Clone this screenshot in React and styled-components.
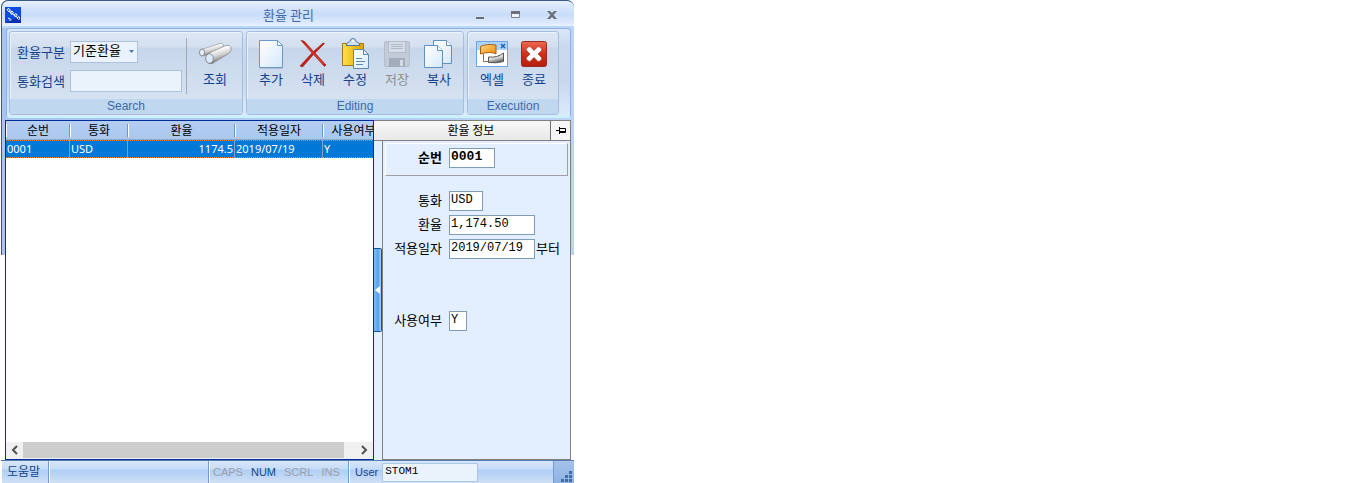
import React from "react";
import styled, { createGlobalStyle, css } from "styled-components";

const korean = '"Noto Sans CJK KR", sans-serif';
const sans = '"Liberation Sans", "Noto Sans CJK KR", sans-serif';
const mono = '"Liberation Mono", "Noto Sans CJK KR", monospace';
const navy = "#15428b";

const GlobalStyle = createGlobalStyle`
  *, *::before, *::after { box-sizing: border-box; }
  body { margin: 0; background: #fff; font: 13px/16px ${korean}; color: #000; }
  button, input, select { font: inherit; color: inherit; margin: 0; border-radius: 0; }
  svg { display: block; }
`;

const Window = styled.main`
  display: flex;
  flex-direction: column;
  width: 100%;
  max-width: 574px;
  min-height: 100vh;
  padding-left: 1px;
`;

const Frame = styled.div`
  flex: 1;
  display: flex;
  flex-direction: column;
  border-radius: 7px 7px 0 0;
  background:
    linear-gradient(#3b5a82, #3b5a82) 0 0 / 1px 255px no-repeat,
    linear-gradient(90deg, #a9c5ee, #bcd3f6) 0 0 / 100% 255px no-repeat;
`;

const TitleBar = styled.header`
  display: flex;
  align-items: center;
  height: 28px;
  padding: 0 10px 0 3px;
  border: 1px solid #3b5a82;
  border-width: 1px 0 0 1px;
  border-radius: 7px 7px 0 0;
  background: linear-gradient(#e6f0ff, #d3e3fb 30%, #c9dcf8 50%, #dce9fd 80%, #e8f2ff 92%, #9cc3f2 96%, #d8e8fd);
`;

const Title = styled.h1`
  flex: 1;
  margin: 0;
  padding-left: 88px;
  text-align: center;
  font: 13px/20px ${korean};
  color: #3e6aaa;
`;

const WindowButtons = styled.div`
  display: flex;
  gap: 12px;
`;

const WindowButton = styled.button`
  width: 24px;
  height: 20px;
  padding: 0;
  border: 0;
  background: none;
  display: grid;
  place-items: center;
`;

const Ribbon = styled.div`
  display: flex;
  gap: 3px;
  height: 90px;
  margin: 0 3px 2px 5px;
  padding: 2px 2px 1px;
  border: 1px solid #8db2e3;
  border-bottom: 2px solid #c9f2ff;
  border-radius: 4px;
  background: linear-gradient(#dbe7f8, #c9d9ee 20%, #c7d8ed 60%, #dcebfb);
`;

const Group = styled.section`
  display: flex;
  flex-direction: column;
  border: 1px solid #a5bedf;
  border-radius: 3px;
  box-shadow: inset 1px 1px 0 #eaf2fb;
  background: linear-gradient(#dde8f5, #d3dfef 18%, #c7d6ea 20%, #d8e5f3 100%);
`;

const GroupContent = styled.div`
  flex: 1;
  display: flex;
  padding: 4px 3px 0;
`;

const GroupCaption = styled.h2`
  margin: 0;
  height: 15px;
  background: #c0d7f0;
  color: #3e6aaa;
  text-align: center;
  font: 12px/15px ${sans};
`;

const SearchFields = styled.div`
  display: grid;
  grid-template-columns: 53px 112px;
  grid-auto-rows: 22px;
  row-gap: 7px;
  align-items: center;
  padding: 5px 4px 0;
  color: ${navy};
`;

const SelectWrap = styled.div`
  position: relative;
  width: 68px;
  height: 22px;
`;

const Select = styled.select`
  appearance: none;
  width: 100%;
  height: 100%;
  padding: 0 2px 4px;
  border: 1px solid #abc1de;
  background: #eaf2fb;
  color: #000;
`;

const SelectArrow = styled.svg`
  position: absolute;
  right: 4px;
  top: 9px;
  pointer-events: none;
`;

const SearchInput = styled.input`
  width: 100%;
  height: 22px;
  padding: 0 2px;
  border: 1px solid #abc1de;
  background: #eaf2fb;
`;

const Separator = styled.div`
  width: 1px;
  height: 56px;
  margin: 2px 4px 0 0;
  background: #a4a8b0;
`;

const ToolButton = styled.button`
  display: flex;
  flex-direction: column;
  align-items: center;
  width: ${(p) => (p.$wide ? "48px" : "42px")};
  height: 60px;
  padding: 1px 0 0;
  border: 0;
  background: none;
  color: ${navy};
  line-height: 16px;
  &:disabled { color: #8d8d8d; }
`;

const Body = styled.div`
  flex: 1;
  display: flex;
  margin: 0 3px 0 4px;
  min-height: 0;
`;

const GridPanel = styled.section`
  flex: 1 1 0;
  min-width: 0;
  display: flex;
  flex-direction: column;
  border: 1px solid #002d96;
  background: #fff;
`;

const GridScroll = styled.div`
  flex: 1;
  overflow: hidden;
`;

const Table = styled.table`
  width: 378px;
  table-layout: fixed;
  border-collapse: separate;
  border-spacing: 0;
`;

const Th = styled.th`
  width: ${(p) => p.$w}px;
  height: 19px;
  padding: 0;
  border-bottom: 1px solid #8ba8d0;
  font: 12px/18px ${korean};
  background:
    linear-gradient(#6f93c9, #6f93c9) 100% 3px / 1px 13px no-repeat,
    linear-gradient(#fff, #fff) 0 3px / 1px 13px no-repeat,
    linear-gradient(#b5cef2, #a9c7f0);
`;

const dots = "repeating-linear-gradient(90deg, #ff8728 0 1px, #0078d7 1px 2px)";

const Td = styled.td`
  height: 18px;
  padding: 0 1px;
  background:
    ${dots} 0 0 / 100% 1px no-repeat,
    ${dots} 0 100% / 100% 1px no-repeat,
    #0078d7;
  color: #fff;
  border-right: 1px solid #7f9fc4;
  font: 11px/18px "Noto Sans", sans-serif;
  text-align: ${(p) => (p.$right ? "right" : "left")};
`;

const ScrollBar = styled.div`
  display: flex;
  height: 17px;
  padding-bottom: 1px;
  background: #f0f0f0;
`;

const ScrollButton = styled.button`
  flex: none;
  width: ${(p) => p.$w}px;
  padding: 0;
  border: 0;
  background: none;
  display: grid;
  place-items: center;
`;

const ScrollThumb = styled.div`
  flex: 1;
  background: #cdcdcd;
`;

const InfoPanel = styled.aside`
  flex: none;
  width: 197px;
  display: flex;
  flex-direction: column;
`;

const InfoHeader = styled.div`
  display: flex;
  height: 21px;
  border: 1px solid #808080;
  border-left: 0;
  background: linear-gradient(#f8f8f8, #e8e8e8);
`;

const InfoTitle = styled.h2`
  flex: 1;
  margin: 0;
  padding-left: 18px;
  text-align: center;
  font: 12px/17px ${korean};
`;

const PinButton = styled.button`
  width: 20px;
  padding: 0;
  border: 0;
  border-left: 1px solid #707070;
  background: #f6f6f6;
  display: grid;
  place-items: center;
`;

const InfoContent = styled.div`
  flex: 1;
  display: flex;
`;

const Splitter = styled.div`
  display: flex;
  align-items: center;
  width: 8px;
  padding-bottom: 22px;
  background: #e3eeff;
`;

const SplitterHandle = styled.button`
  width: 8px;
  height: 84px;
  padding: 0;
  border: 1px solid #1e4f9c;
  border-left: 0;
  border-radius: 0 2px 2px 0;
  background: linear-gradient(90deg, #86b9fb, #5c9df2 60%, #a9d0ff);
  display: grid;
  place-items: center;
`;

const Form = styled.form`
  flex: 1;
  padding: 2px 2px 0;
  border: 1px solid #808080;
  border-width: 0 1px 1px;
  background: #e3eeff;
`;

const KeyBox = styled.div`
  height: 33px;
  margin-bottom: 15px;
  padding-top: 4px;
  border: 1px solid #a0a0a0;
  border-top-color: #fff;
  border-left-color: #fff;
`;

const Row = styled.div`
  display: flex;
  gap: 1px;
  height: 20px;
  margin: 0 0 4px ${(p) => (p.$key ? "0" : "1px")};
  ${(p) => p.$spaced && css`margin-top: 52px;`}
  ${(p) => p.$key && css`font-weight: 700;`}
`;

const FieldLabel = styled.label`
  width: 62px;
  padding-right: 6px;
  text-align: right;
  font-size: 13px;
  line-height: 18px;
`;

const FieldInput = styled.input`
  width: ${(p) => p.$w}px;
  height: 20px;
  padding: 0 1px 3px;
  border: 1px solid #7f9db9;
  background: #fff;
  font: ${(p) => (p.$bold ? "700 13px" : "12px")}/16px ${mono};
`;

const Suffix = styled.span`
  line-height: 18px;
`;

const StatusBar = styled.footer`
  display: flex;
  height: 23px;
  border-top: 1px solid #567db1;
  color: ${navy};
  background: linear-gradient(#d7e6f9, #c6dcf8 36%, #b0cef5 42%, #cfe0f7);
`;

const StatusCell = styled.div`
  display: flex;
  align-items: center;
  gap: 8px;
  flex: ${(p) => (p.$grow ? "1" : "none")};
  width: ${(p) => p.$w}px;
  padding-left: ${(p) => p.$pad || 4}px;
  border-right: 1px solid #6f9bd0;
  box-shadow: inset 1px 0 0 #fff;
  font: 11px/20px ${sans};
`;

const KeyState = styled.span`
  color: ${(p) => (p.$on ? navy : "#9c9fa6")};
`;

const HelpButton = styled.button`
  padding: 0 0 2px;
  border: 0;
  background: none;
  font: 12px/18px ${korean};
`;

const UserLabel = styled.label`
  display: flex;
  align-items: center;
  gap: 4px;
`;

const UserInput = styled.input`
  width: 96px;
  height: 19px;
  padding: 0 2px 2px;
  border: 1px solid #abc7e8;
  background: #eaf2fb;
  color: #000;
  font: 11px/16px ${mono};
`;

const Grip = styled.div`
  display: flex;
  align-items: flex-end;
  justify-content: flex-end;
  width: 20px;
  padding: 0 2px 1px 0;
  background: linear-gradient(#a4c2ea, #8db2e3);
`;

const AppIcon = () => (
  <svg width="16" height="16" viewBox="0 0 16 16" aria-hidden="true">
    <rect width="16" height="16" fill="#0a4be0" />
    <path d="M0 16L16 9v7z" fill="#0a2fae" />
    <g fill="none" stroke="#fff">
      <path d="M2 2.500l2-1 1.500 2-2 1zM5 5.500l2-1.500 1.500 2-2 1.500zM9 8l2-1.500 1 2-1.500 1.500zM12 11l2-1.500 1 2-1.500 1z" />
      <path d="M4 4l9 7M3 11l3 1.500-1.500 1.500" />
    </g>
  </svg>
);

const Defs = () => (
  <defs>
    <linearGradient id="paper" x1="0" y1="0" x2="1" y2="1"><stop stopColor="#fff" /><stop offset="1" stopColor="#d5e9fb" /></linearGradient>
    <linearGradient id="gold" x1="0" y1="0" x2="0" y2="1"><stop stopColor="#ffe27a" /><stop offset="1" stopColor="#e9a51d" /></linearGradient>
    <linearGradient id="clip" x1="0" y1="0" x2="1" y2="0"><stop stopColor="#ffe04d" /><stop offset="1" stopColor="#dca400" /></linearGradient>
    <linearGradient id="orange" x1="0" y1="0" x2="1" y2="1"><stop stopColor="#ffd98c" /><stop offset="1" stopColor="#f08c00" /></linearGradient>
    <linearGradient id="red" x1="0" y1="0" x2="0" y2="1"><stop stopColor="#ec6a55" /><stop offset=".5" stopColor="#cf2f18" /><stop offset="1" stopColor="#b41f10" /></linearGradient>
    <linearGradient id="metal" x1="0" y1="0" x2=".4" y2="1"><stop stopColor="#b4b4b4" /><stop offset=".35" stopColor="#fff" /><stop offset=".65" stopColor="#cfcfcf" /><stop offset="1" stopColor="#6a6a6a" /></linearGradient>
  </defs>
);

const Icon = ({ children }) => (
  <svg width="34" height="34" viewBox="0 0 34 34" aria-hidden="true">
    <Defs />
    {children}
  </svg>
);

const icons = {
  search: (
    <Icon>
      <path d="M3.500 12.500L22 6.500q3-1 3.500 1.500l-1 3L6 19q-4 0-4-3.500z" fill="url(#metal)" stroke="#999" strokeWidth=".7" />
      <ellipse cx="4" cy="15.500" rx="2.500" ry="3.500" fill="#e4efff" stroke="#777" strokeWidth=".8" />
      <path d="M10 16.500L28 8.500q4-1 5 1.500v3.500q-.5 2-3 3.500L14.500 26.500q-5 1-6.500-4z" fill="url(#metal)" stroke="#888" strokeWidth=".7" />
      <ellipse cx="11.500" cy="21.500" rx="3.800" ry="4.800" fill="#dcebff" stroke="#777" strokeWidth=".8" />
    </Icon>
  ),
  add: (
    <Icon>
      <path d="M6 31h23" stroke="#6c8199" strokeOpacity=".6" />
      <path d="M5.500 3.500h18l5 5v22h-23z" fill="url(#paper)" stroke="#6a9ac5" />
      <path d="M23.500 3.500v5h5z" fill="#fff" stroke="#6a9ac5" />
    </Icon>
  ),
  remove: (
    <Icon>
      <path d="M5 3.500l3 .5 9.500 10.500L27 6l1.500.5-9.500 9.500 11 12-1.500 1.500L17.500 17.500 6.500 30 4 29l12-13z" fill="#cf1a10" stroke="#8f1f18" strokeWidth=".6" />
      <path d="M6 5l11.500 11L27.500 27" fill="none" stroke="#ef6152" strokeWidth=".7" />
    </Icon>
  ),
  edit: (
    <Icon>
      <path d="M4.500 6.500h21v22h-21z" fill="url(#clip)" stroke="#a6741a" />
      <path d="M8 8.500Q9 5 12 4.500q0-3 3-3t3 3q3 .5 4 4z" fill="#cfe1f3" stroke="#56799f" />
      <circle cx="15" cy="4" r="1.200" fill="#fff" />
      <path d="M15.500 12.500h10l5 5v14h-15z" fill="url(#paper)" stroke="#5f88b5" />
      <path d="M25.500 12.500v5h5M18 21.500h6M18 24.500h9M18 27.500h7" fill="none" stroke="#5f88b5" />
    </Icon>
  ),
  save: (
    <Icon>
      <path d="M4.500 6q0-1.500 1.500-1.500h22q1.500 0 1.500 1.500v22q0 1.500-1.500 1.500H6q-1.500 0-1.500-1.500z" fill="#c3cbd8" stroke="#b3bccb" />
      <rect x="8.500" y="4.500" width="17" height="11" fill="#d6deea" stroke="#b3bccb" />
      <path d="M11 7.500h12M11 9.500h12M11 11.500h12" stroke="#b0b9c8" />
      <rect x="9" y="21" width="16" height="9" fill="#a3acbb" />
      <rect x="20" y="23" width="3" height="6" fill="#d4dae3" />
    </Icon>
  ),
  copy: (
    <Icon>
      <path d="M11.500 3.500h13l5 5v18h-18z" fill="url(#paper)" stroke="#5f91c0" />
      <path d="M24.500 3.500v5h5" fill="#fff" stroke="#5f91c0" />
      <path d="M2.500 8.500h13l5 5v17h-18z" fill="url(#paper)" stroke="#5f91c0" />
      <path d="M15.500 8.500v5h5" fill="#fff" stroke="#5f91c0" />
    </Icon>
  ),
  excel: (
    <Icon>
      <rect x="1.500" y="4.500" width="31" height="25" fill="#fff" stroke="#6ea5e0" />
      <path d="M2 5h30v8H2z" fill="#acd3fa" />
      <path d="M26 7l4 4m0-4l-4 4" stroke="#2062a8" strokeWidth="1.500" />
      <path d="M8.500 17v7.500h6.500" fill="none" stroke="#8a6a50" />
      <path d="M13.500 20q9 1 15-4v8.500q-7 2-15 1z" fill="url(#metal)" stroke="#555" />
      <path d="M5.500 9.500q6-3 15.500-1.500v9q-2-1.500-6.500-1.500-5 0-9 1.500z" fill="url(#orange)" stroke="#a65d10" />
    </Icon>
  ),
  exit: (
    <Icon>
      <rect x="4.500" y="4.500" width="25" height="25" rx="2" fill="url(#red)" stroke="#9c2a1e" />
      <path d="M13 9.500l4 4 4-4q3 0 4 3.500l-4 4 4 4q-1 3.500-4 3.500l-4-4-4 4q-3 0-4-3.500l4-4-4-4q1-3.500 4-3.500z" fill="#fff" stroke="#a5281b" strokeWidth=".6" />
    </Icon>
  ),
};

const editing = [
  ["add", "추가"],
  ["remove", "삭제"],
  ["edit", "수정"],
  ["save", "저장", true],
  ["copy", "복사"],
];

const columns = [
  ["순번", 64],
  ["통화", 58],
  ["환율", 107],
  ["적용일자", 88],
  ["사용여부", 61],
];

function Field({ id, label, value, width, suffix, spaced, isKey }) {
  return (
    <Row $spaced={spaced} $key={isKey}>
      <FieldLabel htmlFor={id}>{label}</FieldLabel>
      <FieldInput id={id} defaultValue={value} $w={width} $bold={isKey} />
      {suffix && <Suffix>{suffix}</Suffix>}
    </Row>
  );
}

export default function App() {
  return (
    <>
      <GlobalStyle />
      <Window>
        <Frame>
          <TitleBar>
            <AppIcon />
            <Title>환율 관리</Title>
            <WindowButtons>
              <WindowButton aria-label="최소화">
                <svg width="10" height="10"><path d="M1 7h8v2H1z" fill="#6a7078" /></svg>
              </WindowButton>
              <WindowButton aria-label="최대화">
                <svg width="10" height="10"><path d="M.5 1.500h8v6h-8z" fill="#edf4fd" stroke="#7a828c" /><path d="M0 1h9v3H0z" fill="#6a7078" /></svg>
              </WindowButton>
              <WindowButton aria-label="닫기">
                <svg width="10" height="10"><path d="M0 1h3l2 2 2-2h3L6.500 5 10 9H7L5 7 3 9H0l3.500-4z" fill="#6a7078" /></svg>
              </WindowButton>
            </WindowButtons>
          </TitleBar>

          <Ribbon>
            <Group>
              <GroupContent>
                <SearchFields>
                  <label htmlFor="rateType">환율구분</label>
                  <SelectWrap>
                    <Select id="rateType"><option>기준환율</option></Select>
                    <SelectArrow width="5" height="3"><path d="M0 0h5L2.500 3z" fill="#4a78b5" /></SelectArrow>
                  </SelectWrap>
                  <label htmlFor="currencySearch">통화검색</label>
                  <SearchInput id="currencySearch" />
                </SearchFields>
                <Separator />
                <ToolButton $wide>{icons.search}조회</ToolButton>
              </GroupContent>
              <GroupCaption>Search</GroupCaption>
            </Group>
            <Group>
              <GroupContent>
                {editing.map(([icon, text, disabled]) => (
                  <ToolButton key={icon} disabled={disabled}>{icons[icon]}{text}</ToolButton>
                ))}
              </GroupContent>
              <GroupCaption>Editing</GroupCaption>
            </Group>
            <Group>
              <GroupContent>
                <ToolButton>{icons.excel}엑셀</ToolButton>
                <ToolButton>{icons.exit}종료</ToolButton>
              </GroupContent>
              <GroupCaption>Execution</GroupCaption>
            </Group>
          </Ribbon>

          <Body>
            <GridPanel>
              <GridScroll>
                <Table>
                  <thead>
                    <tr>{columns.map(([name, w]) => <Th key={name} $w={w}>{name}</Th>)}</tr>
                  </thead>
                  <tbody>
                    <tr>
                      <Td>0001</Td>
                      <Td>USD</Td>
                      <Td $right>1174.5</Td>
                      <Td>2019/07/19</Td>
                      <Td>Y</Td>
                    </tr>
                  </tbody>
                </Table>
              </GridScroll>
              <ScrollBar>
                <ScrollButton $w={17} aria-label="왼쪽으로">
                  <svg width="8" height="10"><path d="M6 1L2 5l4 4" fill="none" stroke="#505050" strokeWidth="2" /></svg>
                </ScrollButton>
                <ScrollThumb />
                <ScrollButton $w={29} aria-label="오른쪽으로">
                  <svg width="18" height="10"><path d="M12 1l4 4-4 4" fill="none" stroke="#505050" strokeWidth="2" /></svg>
                </ScrollButton>
              </ScrollBar>
            </GridPanel>

            <InfoPanel>
              <InfoHeader>
                <InfoTitle>환율 정보</InfoTitle>
                <PinButton aria-label="고정">
                  <svg width="10" height="9"><path d="M0 4.500h4M3.500 1v7M4 2.500h5.500v4H4M4 5.500h5" fill="none" stroke="#000" /></svg>
                </PinButton>
              </InfoHeader>
              <InfoContent>
                <Splitter>
                  <SplitterHandle aria-label="패널 접기">
                    <svg width="5" height="8"><path d="M5 0v8L0 4z" fill="#fff" /></svg>
                  </SplitterHandle>
                </Splitter>
                <Form>
                  <KeyBox>
                    <Field id="seq" label="순번" value="0001" width={46} isKey />
                  </KeyBox>
                  <Field id="currency" label="통화" value="USD" width={34} />
                  <Field id="rate" label="환율" value="1,174.50" width={86} />
                  <Field id="applied" label="적용일자" value="2019/07/19" width={86} suffix="부터" />
                  <Field id="used" label="사용여부" value="Y" width={18} spaced />
                </Form>
              </InfoContent>
            </InfoPanel>
          </Body>
        </Frame>

        <StatusBar>
          <StatusCell $w={48} $pad={6}><HelpButton>도움말</HelpButton></StatusCell>
          <StatusCell $w={160} />
          <StatusCell $w={140}>
            <KeyState>CAPS</KeyState>
            <KeyState $on>NUM</KeyState>
            <KeyState>SCRL</KeyState>
            <KeyState>INS</KeyState>
          </StatusCell>
          <StatusCell $grow $pad={6}>
            <UserLabel>User<UserInput defaultValue="STOM1" /></UserLabel>
          </StatusCell>
          <Grip>
            <svg width="11" height="11"><path d="M8 0h3v3H8zM4 4h3v3H4zM8 4h3v3H8zM0 8h3v3H0zM4 8h3v3H4zM8 8h3v3H8z" fill="#456da5" /></svg>
          </Grip>
        </StatusBar>
      </Window>
    </>
  );
}
